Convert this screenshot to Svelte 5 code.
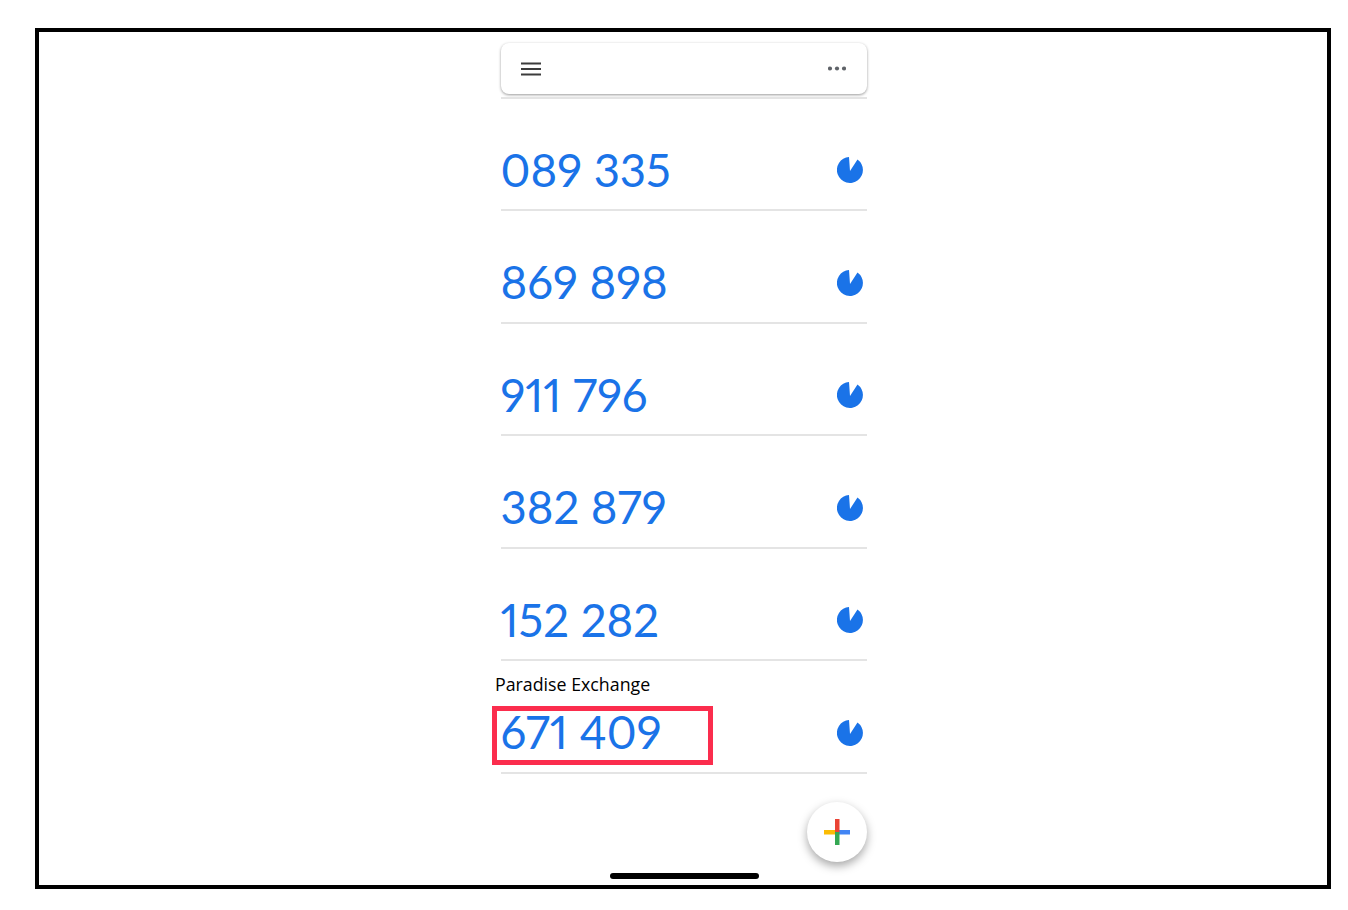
<script>
	let codes = [
		{ code: '089 335' },
		{ code: '869 898' },
		{ code: '911 796' },
		{ code: '382 879' },
		{ code: '152 282' },
		{ code: '671 409', label: 'Paradise Exchange', marked: true }
	];
</script>

<div class="frame">
	<div class="phone">
		<header class="topbar">
			<svg class="menu" width="20" height="14" viewBox="0 0 20 14">
				<path d="M0 1.5H20M0 7H20M0 12.5H20" stroke="#3c3c3c" stroke-width="2.2" fill="none" />
			</svg>
			<svg class="more" width="18" height="5" viewBox="0 0 18 5">
				<circle cx="2" cy="2.5" r="2.1" fill="#5f6368" />
				<circle cx="9" cy="2.5" r="2.1" fill="#5f6368" />
				<circle cx="16" cy="2.5" r="2.1" fill="#5f6368" />
			</svg>
		</header>
		<div class="rule"></div>

		<ul class="list">
			{#each codes as item}
				<li class="row">
					<span class="label">{item.label ?? ''}</span>
					<div class="line">
						<span class="code" class:marked={item.marked}>{item.code}</span>
						<svg class="timer" width="26" height="26" viewBox="0 0 26 26">
							<path d="M13 14L20.5 2.4A13 13 0 1 1 12 0Z" fill="#1a73e8" />
						</svg>
					</div>
				</li>
			{/each}
		</ul>

		<div class="fab-wrap">
			<button class="fab" aria-label="Add">
				<svg width="26" height="26" viewBox="0 0 26 26">
					<rect x="0" y="11" width="13" height="4.5" fill="#fbbc04" />
					<rect x="13" y="11" width="13" height="4.5" fill="#4285f4" />
					<rect x="11" y="0" width="4.5" height="13" fill="#ea4335" />
					<rect x="11" y="13" width="4.5" height="13" fill="#34a853" />
				</svg>
			</button>
		</div>
		<div class="home"></div>
	</div>
</div>

<style>
	:global(body) {
		background: #fff;
	}

	.frame {
		box-sizing: border-box;
		width: 1296px;
		height: 861px;
		margin: 28px 0 0 35px;
		border: 4px solid #000;
		display: flex;
		justify-content: center;
	}

	.phone {
		width: 366px;
		margin-left: 2px;
		padding-top: 11px;
	}

	.topbar {
		box-sizing: border-box;
		height: 51px;
		background: #fff;
		border-radius: 8px;
		box-shadow: 0 1px 3px rgba(0, 0, 0, 0.4);
		display: flex;
		align-items: center;
		justify-content: space-between;
		padding: 0 21px 0 20px;
	}

	.rule {
		height: 2px;
		margin-top: 2.5px;
		background: #e4e4e4;
	}

	.list {
		list-style: none;
		margin: 0;
		padding: 0;
	}

	.row {
		box-sizing: border-box;
		height: 112.5px;
		border-bottom: 2px solid #e4e4e4;
		display: flex;
		flex-direction: column;
	}

	.label {
		height: 38px;
		margin: 10px 0 0 -6px;
		font-family: 'Open Sans', sans-serif;
		font-size: 17.8px;
		line-height: 26px;
		color: #000;
	}

	.line {
		display: flex;
		align-items: center;
		justify-content: space-between;
		height: 46px;
		padding-right: 4px;
	}

	.timer {
		margin-top: 1px;
	}

	.code {
		position: relative;
		margin-left: -0.5px;
		font-family: Lato, sans-serif;
		font-size: 45.5px;
		line-height: 46px;
		font-feature-settings: 'pnum';
		color: #1a73e8;
	}

	.code.marked::after {
		content: '';
		position: absolute;
		top: -3px;
		left: -8.5px;
		width: 221px;
		height: 59px;
		box-sizing: border-box;
		border: 5px solid #fb2d4d;
	}

	.fab-wrap {
		display: flex;
		justify-content: flex-end;
		margin-top: 28px;
	}

	.fab {
		width: 60px;
		height: 60px;
		padding: 0;
		border: none;
		border-radius: 50%;
		background: #fff;
		box-shadow: 0 4px 10px rgba(0, 0, 0, 0.35);
		display: flex;
		align-items: center;
		justify-content: center;
	}

	.home {
		width: 149px;
		height: 6px;
		margin: 11px auto 0;
		border-radius: 3px;
		background: #000;
	}
</style>
